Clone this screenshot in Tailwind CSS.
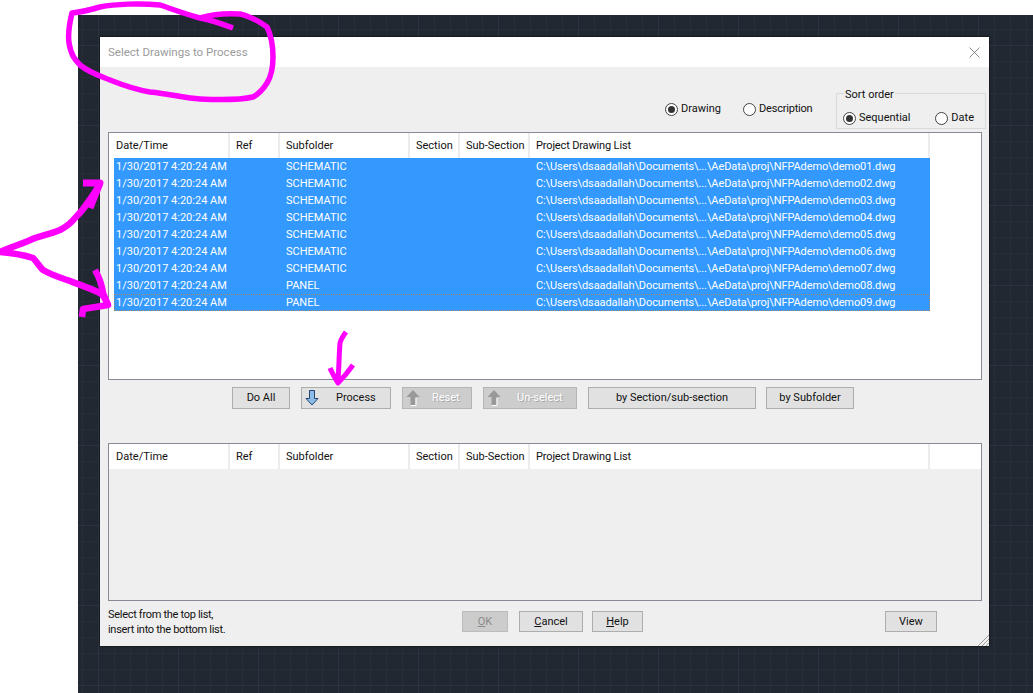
<!DOCTYPE html>
<html lang="en">
<head>
    <meta charset="UTF-8">
    <title>Select Drawings to Process</title>
    <script src="https://cdn.jsdelivr.net/npm/@tailwindcss/browser@4"></script>
</head>
<body class="relative bg-white h-[693px] w-[1033px] overflow-hidden font-['Roboto',sans-serif] text-[11px] text-[#111] whitespace-nowrap">
    <!-- dark drawing canvas -->
    <div class="ml-[78px] mt-[15px] h-[678px] pt-[22px] pl-[22px] bg-[#222831] bg-[linear-gradient(#2b3440_1px,transparent_1px),linear-gradient(90deg,#2b3440_1px,transparent_1px),linear-gradient(#272e38_1px,transparent_1px),linear-gradient(90deg,#272e38_1px,transparent_1px)] bg-[size:80px_80px,80px_80px,16px_16px,16px_16px] bg-[position:0_30px,20px_0,0_14px,4px_0]">
        <!-- dialog -->
        <div class="relative w-[889px] h-[609px] bg-[#efefef] shadow-[0_0_2px_#000]">
            <div class="h-[30px] bg-white flex items-center justify-between pl-[8px] pr-[9px] text-[#9b9b9b] text-[11.5px]">
                <span class="pt-px">Select Drawings to Process</span>
                <svg width="11" height="11" viewBox="0 0 11 11" fill="none" stroke="#8a8a8a" stroke-width="1"><path d="M0.5 0.5 10.5 10.5M10.5 0.5 0.5 10.5"/></svg>
            </div>

            <!-- options row -->
            <div class="h-[65px] relative">
                <div class="absolute left-[565px] top-[34px] flex items-center gap-[3px]">
                    <span class="w-[13px] h-[13px] rounded-full border border-[#444] bg-white flex items-center justify-center"><span class="w-[7px] h-[7px] rounded-full bg-[#333]"></span></span>
                    <span>Drawing</span>
                </div>
                <div class="absolute left-[643px] top-[34px] flex items-center gap-[3px]">
                    <span class="w-[13px] h-[13px] rounded-full border border-[#444] bg-white"></span>
                    <span class="tracking-[-0.2px]">Description</span>
                </div>
                <!-- group box, the label sits over its top border -->
                <div class="absolute left-[736px] top-[26px] w-[150px] h-[36px] border border-[#d9d9d9] pl-[6px] pr-[11px] pt-[16px]">
                    <span class="absolute left-[7px] -top-[6px] bg-[#efefef] px-[1px] leading-[14px]">Sort order</span>
                    <div class="flex items-center justify-between">
                        <div class="flex items-center gap-[3px]">
                            <span class="w-[13px] h-[13px] rounded-full border border-[#444] bg-white flex items-center justify-center"><span class="w-[7px] h-[7px] rounded-full bg-[#333]"></span></span>
                            <span>Sequential</span>
                        </div>
                        <div class="flex items-center gap-[3px]">
                            <span class="w-[13px] h-[13px] rounded-full border border-[#444] bg-white"></span>
                            <span>Date</span>
                        </div>
                    </div>
                </div>
            </div>

            <!-- top list -->
            <div class="ml-[8px] w-[874px] h-[248px] border border-[#868a94] bg-white">
                <div class="grid grid-cols-[121px_50px_130px_50px_70px_400px] h-[25px] items-stretch">
                    <div class="border-r-2 border-[#ececec] pl-[7px] pt-[2px] flex items-center">Date/Time</div>
                    <div class="border-r-2 border-[#ececec] pl-[6px] pt-[2px] flex items-center">Ref</div>
                    <div class="border-r-2 border-[#ececec] pl-[6px] pt-[2px] flex items-center">Subfolder</div>
                    <div class="border-r-2 border-[#ececec] pl-[6px] pt-[2px] flex items-center">Section</div>
                    <div class="border-r-2 border-[#ececec] pl-[6px] pt-[2px] flex items-center">Sub-Section</div>
                    <div class="border-r-2 border-[#ececec] pl-[6px] pt-[2px] flex items-center tracking-[-0.15px]">Project Drawing List</div>
                </div>
                <div id="rows" class="ml-[5px] w-[816px] text-white"></div>
            </div>

            <!-- action buttons -->
            <div class="ml-[132px] mt-[7px] flex gap-[11px] h-[22px]">
                <button class="w-[58px] border border-[#adadad] bg-[#e1e1e1] pt-px">Do All</button>
                <button class="w-[90px] border border-[#adadad] bg-[#e1e1e1] flex items-center pl-[3px]">
                    <svg width="14" height="16" viewBox="0 0 14 16"><path d="M4.500 0.500H9.500V8.500H13L7 15 1 8.500H4.500Z" fill="#8cbbe8" stroke="#26476f"/></svg>
                    <span class="ml-[17px] pt-px">Process</span>
                </button>
                <button class="w-[70px] border border-[#b5b5b5] bg-[#cdcdcd] flex items-center pl-[3px] text-white [text-shadow:1px_1px_0_#a8a8a8]">
                    <svg width="14" height="16" viewBox="0 0 14 16"><path d="M7 0 13.500 7H9.500V15H4.500V7H0.500Z" fill="#999"/><path d="M10 8V15.500H5" fill="none" stroke="#fff"/></svg>
                    <span class="ml-[12px] pt-px">Reset</span>
                </button>
                <button class="w-[94px] border border-[#b5b5b5] bg-[#cdcdcd] flex items-center pl-[3px] text-white [text-shadow:1px_1px_0_#a8a8a8]">
                    <svg width="14" height="16" viewBox="0 0 14 16"><path d="M7 0 13.500 7H9.500V15H4.500V7H0.500Z" fill="#999"/><path d="M10 8V15.500H5" fill="none" stroke="#fff"/></svg>
                    <span class="ml-[16px] pt-px">Un-select</span>
                </button>
                <button class="w-[168px] border border-[#adadad] bg-[#e1e1e1] pt-px">by Section/sub-section</button>
                <button class="w-[88px] -ml-px border border-[#adadad] bg-[#e1e1e1] pt-px">by Subfolder</button>
            </div>

            <!-- bottom list -->
            <div class="ml-[8px] mt-[34px] w-[874px] h-[158px] border border-[#868a94] bg-[#efefef]">
                <div class="grid grid-cols-[121px_50px_130px_50px_70px_400px_1fr] h-[25px] bg-white items-stretch">
                    <div class="border-r-2 border-[#ececec] pl-[7px] pt-[2px] flex items-center">Date/Time</div>
                    <div class="border-r-2 border-[#ececec] pl-[6px] pt-[2px] flex items-center">Ref</div>
                    <div class="border-r-2 border-[#ececec] pl-[6px] pt-[2px] flex items-center">Subfolder</div>
                    <div class="border-r-2 border-[#ececec] pl-[6px] pt-[2px] flex items-center">Section</div>
                    <div class="border-r-2 border-[#ececec] pl-[6px] pt-[2px] flex items-center">Sub-Section</div>
                    <div class="border-r-2 border-[#ececec] pl-[6px] pt-[2px] flex items-center tracking-[-0.15px]">Project Drawing List</div>
                    <div></div>
                </div>
            </div>

            <!-- footer -->
            <div class="relative ml-[8px] h-[45px]">
                <p class="absolute left-0 top-[6px] leading-[15px] tracking-[-0.3px]">Select from the top list,<br>insert into the bottom list.</p>
                <button class="absolute left-[354px] top-[10px] w-[46px] h-[21px] border border-[#bcbcbc] bg-[#cccccc] text-[#8a8a8a] pt-px"><u>O</u>K</button>
                <button class="absolute left-[411px] top-[10px] w-[64px] h-[21px] border border-[#adadad] bg-[#e1e1e1] pt-px"><u>C</u>ancel</button>
                <button class="absolute left-[484px] top-[10px] w-[51px] h-[21px] border border-[#adadad] bg-[#e1e1e1] pt-px"><u>H</u>elp</button>
                <button class="absolute left-[777px] top-[10px] w-[52px] h-[21px] border border-[#adadad] bg-[#e1e1e1] pt-px">View</button>
            </div>

            <!-- resize grip -->
            <svg class="absolute right-0 bottom-0" width="11" height="11" viewBox="0 0 11 11" fill="none" stroke="#9a9a9a"><path d="M0 11 11 0M4 11 11 4M8 11 11 8"/></svg>
        </div>
    </div>

    <!-- hand drawn marks over the screenshot -->
    <svg class="absolute left-0 top-0 pointer-events-none" width="1033" height="693" viewBox="0 0 1033 693" fill="none" stroke="#ff00ff" stroke-width="5.500" stroke-linejoin="round" stroke-linecap="butt">
        <path d="M233 28C222 24 212 20 200 18C185 14 175 10 160 5C140 3 115 4 100 7C90 10 82 12 72 13C69 25 68 35 69 43C71 55 75 60 80 65C90 73 100 76 110 80C125 86 138 90 150 92C170 94 185 98 200 99C220 100 240 100 253 97C260 93 264 88 267 83C272 75 273 65 273 57C273 45 271 35 267 27C260 22 250 16 240 14C225 13 210 15 200 18"/>
        <path d="M0 252C12 247 24 243 35 238C45 235 53 233 60 230C66 227 71 223 75 218C81 212 85 207 88 202C93 196 96 190 100 184" stroke-width="6.500"/>
        <path d="M83 183H100L90 208" stroke-width="7"/>
        <path d="M0 252C12 253 24 255 33 258C37 262 39 266 43 270C50 274 58 277 67 280C78 284 90 288 100 293C104 296 106 300 108 305" stroke-width="6.500"/>
        <path d="M95 270C99 277 102 285 103 293L108 305L83 309L82 317" stroke-width="6.500"/>
        <path d="M346 332C343 336 341 339 340 343C339 355 339 368 338 380M330 368C332 373 335 378 338 383C343 378 348 372 353 365" stroke-width="5"/>
    </svg>

    <script>
        // rows of the top list
        const rows = [
            ["SCHEMATIC", "01"], ["SCHEMATIC", "02"], ["SCHEMATIC", "03"],
            ["SCHEMATIC", "04"], ["SCHEMATIC", "05"], ["SCHEMATIC", "06"],
            ["SCHEMATIC", "07"], ["PANEL", "08"], ["PANEL", "09"]
        ];
        document.getElementById("rows").innerHTML = rows.map(([folder, num], i) => `
            <div class="relative flex h-[17px] pt-[2px] items-center bg-[#3399ff]">
                <span class="w-[172px] shrink-0 pl-[2px]">1/30/2017 4:20:24 AM</span>
                <span class="w-[250px] shrink-0">${folder}</span>
                <span class="tracking-[-0.1px]">C:\\Users\\dsaadallah\\Documents\\...\\AeData\\proj\\NFPAdemo\\demo${num}.dwg</span>
                ${i === 8 ? '<span class="absolute inset-0 border border-dotted border-[#c8823c]/70"></span>' : ''}
            </div>`).join("");
    </script>
</body>
</html>
